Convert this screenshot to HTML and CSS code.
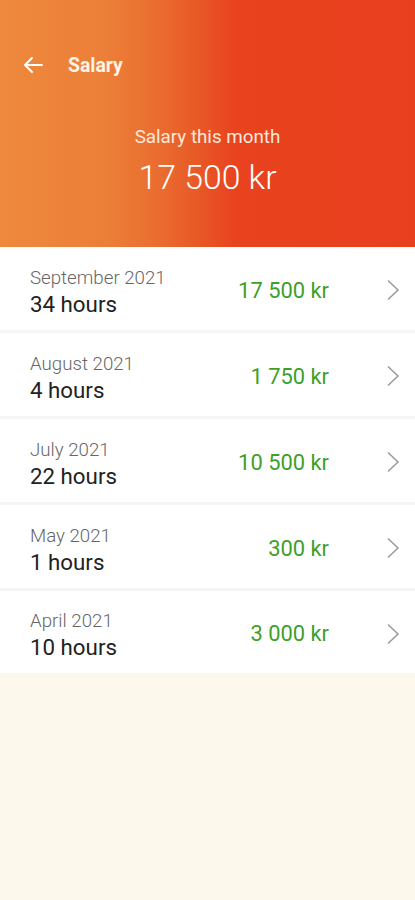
FILE: index.html
```html
<!DOCTYPE html>
<html>
<head>
<meta charset="utf-8">
<link rel="stylesheet" href="styles.css">
</head>
<body>
<div class="page">
  <header class="hero">
    <div class="topbar">
      <svg class="back" width="24" height="24" viewBox="0 0 24 24"><path d="M21 12H4M11 5l-7 7 7 7" fill="none" stroke="#fff" stroke-width="2" stroke-linecap="round" stroke-linejoin="round"/></svg>
      <span class="title">Salary</span>
    </div>
    <div class="summary">
      <div class="sum-label">Salary this month</div>
      <div class="sum-value">17 500 kr</div>
    </div>
  </header>
  <ul class="list">
    <li class="row"><div class="info"><div class="month">September 2021</div><div class="hours">34 hours</div></div><div class="amount">17 500 kr</div><svg class="chev" width="14" height="22" viewBox="0 0 14 22"><path d="M2 1.5l10 9.5-10 9.5" fill="none" stroke="#9a9a9a" stroke-width="1.5"/></svg></li>
    <li class="row"><div class="info"><div class="month">August 2021</div><div class="hours">4 hours</div></div><div class="amount">1 750 kr</div><svg class="chev" width="14" height="22" viewBox="0 0 14 22"><path d="M2 1.5l10 9.5-10 9.5" fill="none" stroke="#9a9a9a" stroke-width="1.5"/></svg></li>
    <li class="row"><div class="info"><div class="month">July 2021</div><div class="hours">22 hours</div></div><div class="amount">10 500 kr</div><svg class="chev" width="14" height="22" viewBox="0 0 14 22"><path d="M2 1.5l10 9.5-10 9.5" fill="none" stroke="#9a9a9a" stroke-width="1.5"/></svg></li>
    <li class="row"><div class="info"><div class="month">May 2021</div><div class="hours">1 hours</div></div><div class="amount">300 kr</div><svg class="chev" width="14" height="22" viewBox="0 0 14 22"><path d="M2 1.5l10 9.5-10 9.5" fill="none" stroke="#9a9a9a" stroke-width="1.5"/></svg></li>
    <li class="row"><div class="info"><div class="month">April 2021</div><div class="hours">10 hours</div></div><div class="amount">3 000 kr</div><svg class="chev" width="14" height="22" viewBox="0 0 14 22"><path d="M2 1.5l10 9.5-10 9.5" fill="none" stroke="#9a9a9a" stroke-width="1.5"/></svg></li>
  </ul>
</div>
</body>
</html>
```
FILE: styles.css
```css
* { box-sizing: border-box; }
html, body { margin: 0; padding: 0; }
body {
  font-family: Roboto, "Liberation Sans", sans-serif;
  background: #fdf8ec;
  width: 415px;
  min-height: 900px;
}
.hero {
  height: 247px;
  background: linear-gradient(90deg, #ee893d 0%, #ec7f38 25%, #ea6d30 38%, #e85a27 47%, #e8421f 57%, #e8401e 100%);
  color: #fff;
  padding-top: 52px;
}
.topbar {
  display: flex;
  align-items: center;
  height: 26px;
  padding-left: 21px;
}
.back { display: block; }
.title {
  margin-left: 23px;
  font-size: 19.4px;
  font-weight: 700;
  color: #fdf3e6;
}
.summary {
  margin-top: 46px;
  text-align: center;
}
.sum-label {
  font-size: 18.8px;
  color: #fbe9dc;
  line-height: 26px;
}
.sum-value {
  font-size: 33.8px;
  font-weight: 300;
  line-height: 40px;
  margin-top: 8px;
  color: #fff;
}
.list {
  list-style: none;
  margin: 0;
  padding: 0;
  background: #f5f5f5;
}
.row {
  display: flex;
  align-items: center;
  height: 83px;
  background: #fff;
  padding-left: 30px;
  padding-right: 15px;
  padding-top: 3px;
  margin-bottom: 3px;
}
.row:last-child { margin-bottom: 0; height: 82px; }
.info { flex: 1; padding-top: 3px; }
.month {
  font-size: 18.7px;
  color: #666;
  line-height: 24px;
  font-weight: 300;
}
.hours {
  font-size: 22.3px;
  color: #222;
  line-height: 28px;
}
.amount {
  font-size: 21.9px;
  color: #3e9f2b;
  margin-right: 57px;
}
.chev { display: block; }
```
